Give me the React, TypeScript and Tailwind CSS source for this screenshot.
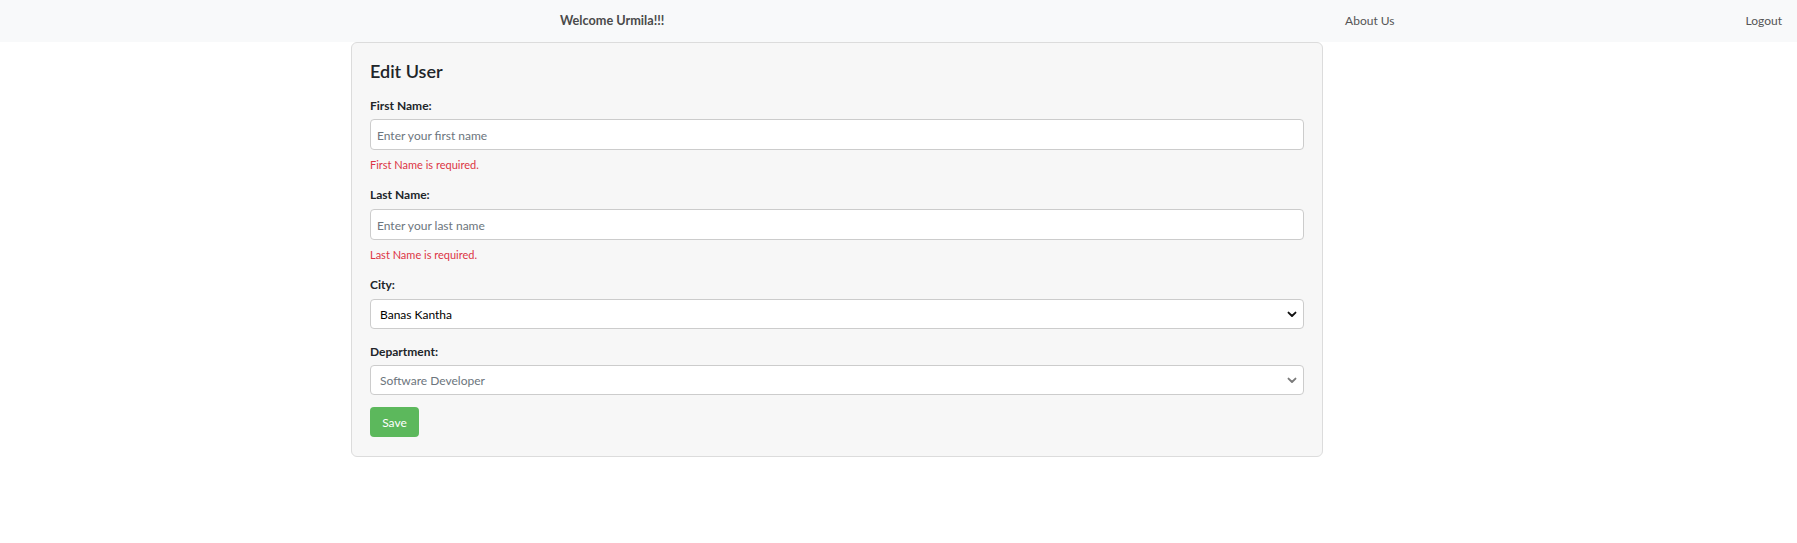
import React from "react";

const font = { fontFamily: '"Lato", "Open Sans", "Noto Sans", sans-serif' };

function Chevron({ color }: { color: string }) {
  return (
    <svg width="10" height="7" viewBox="0 0 10 7" className="shrink-0">
      <polyline points="1.5,1.6 5,5 8.5,1.6" fill="none" stroke={color} strokeWidth="1.9" strokeLinecap="round" strokeLinejoin="round" />
    </svg>
  );
}

function Label({ children, className = "" }: { children: React.ReactNode; className?: string }) {
  return <div className={`text-[12px] leading-[16px] pt-[1px] font-bold text-[#212529] ${className}`}>{children}</div>;
}

function Input({ placeholder }: { placeholder: string }) {
  return (
    <input
      className="block w-full h-[31px] border border-[#cccccc] rounded-[4px] bg-white px-[6px] pt-[2px] text-[12px] text-[#212529] placeholder:text-[#6c757d] outline-none"
      placeholder={placeholder}
      style={font}
    />
  );
}

function SelectBox({ value, dim }: { value: string; dim?: boolean }) {
  return (
    <div className="flex items-center justify-between w-full h-[30px] border border-[#cccccc] rounded-[4px] bg-white pl-[9px] pr-[6px]">
      <span className={`pt-[2px] text-[12px] ${dim ? "text-[#6c757d]" : "text-black"}`}>{value}</span>
      <Chevron color={dim ? "#7a7a7a" : "#111111"} />
    </div>
  );
}

export default function App() {
  return (
    <div className="min-h-screen bg-white" style={font}>
      <nav className="flex items-center h-[42px] bg-[#f8f9fa] pr-[15px] text-[12px]">
        <span className="ml-[560px] text-[12.7px] font-bold text-[#4a4a4a]">Welcome Urmila!!!</span>
        <div className="ml-auto flex gap-[351px] text-[#555]">
          <span>About Us</span>
          <span>Logout</span>
        </div>
      </nav>
      <div className="ml-[351px] w-[972px] border border-[#dcdcdc] rounded-[6px] bg-[#f7f7f7] px-[18px] pt-[17px] pb-[19px]">
        <h4 className="text-[18px] leading-[22px] font-semibold text-[#212529]">Edit User</h4>
        <Label className="mt-[15px] mb-[5px]">First Name:</Label>
        <Input placeholder="Enter your first name" />
        <div className="mt-[7px] text-[11px] leading-[15px] text-[#dc3545]">First Name is required.</div>
        <Label className="mt-[14px] mb-[6px]">Last Name:</Label>
        <Input placeholder="Enter your last name" />
        <div className="mt-[7px] text-[11px] leading-[15px] text-[#dc3545]">Last Name is required.</div>
        <Label className="mt-[14px] mb-[6px]">City:</Label>
        <SelectBox value="Banas Kantha" />
        <Label className="mt-[14px] mb-[5px]">Department:</Label>
        <SelectBox value="Software Developer" dim />
        <button className="mt-[12px] h-[30px] w-[49px] rounded-[4px] bg-[#5cb85c] pt-[2px] text-white text-[12px]" style={font}>
          Save
        </button>
      </div>
    </div>
  );
}
